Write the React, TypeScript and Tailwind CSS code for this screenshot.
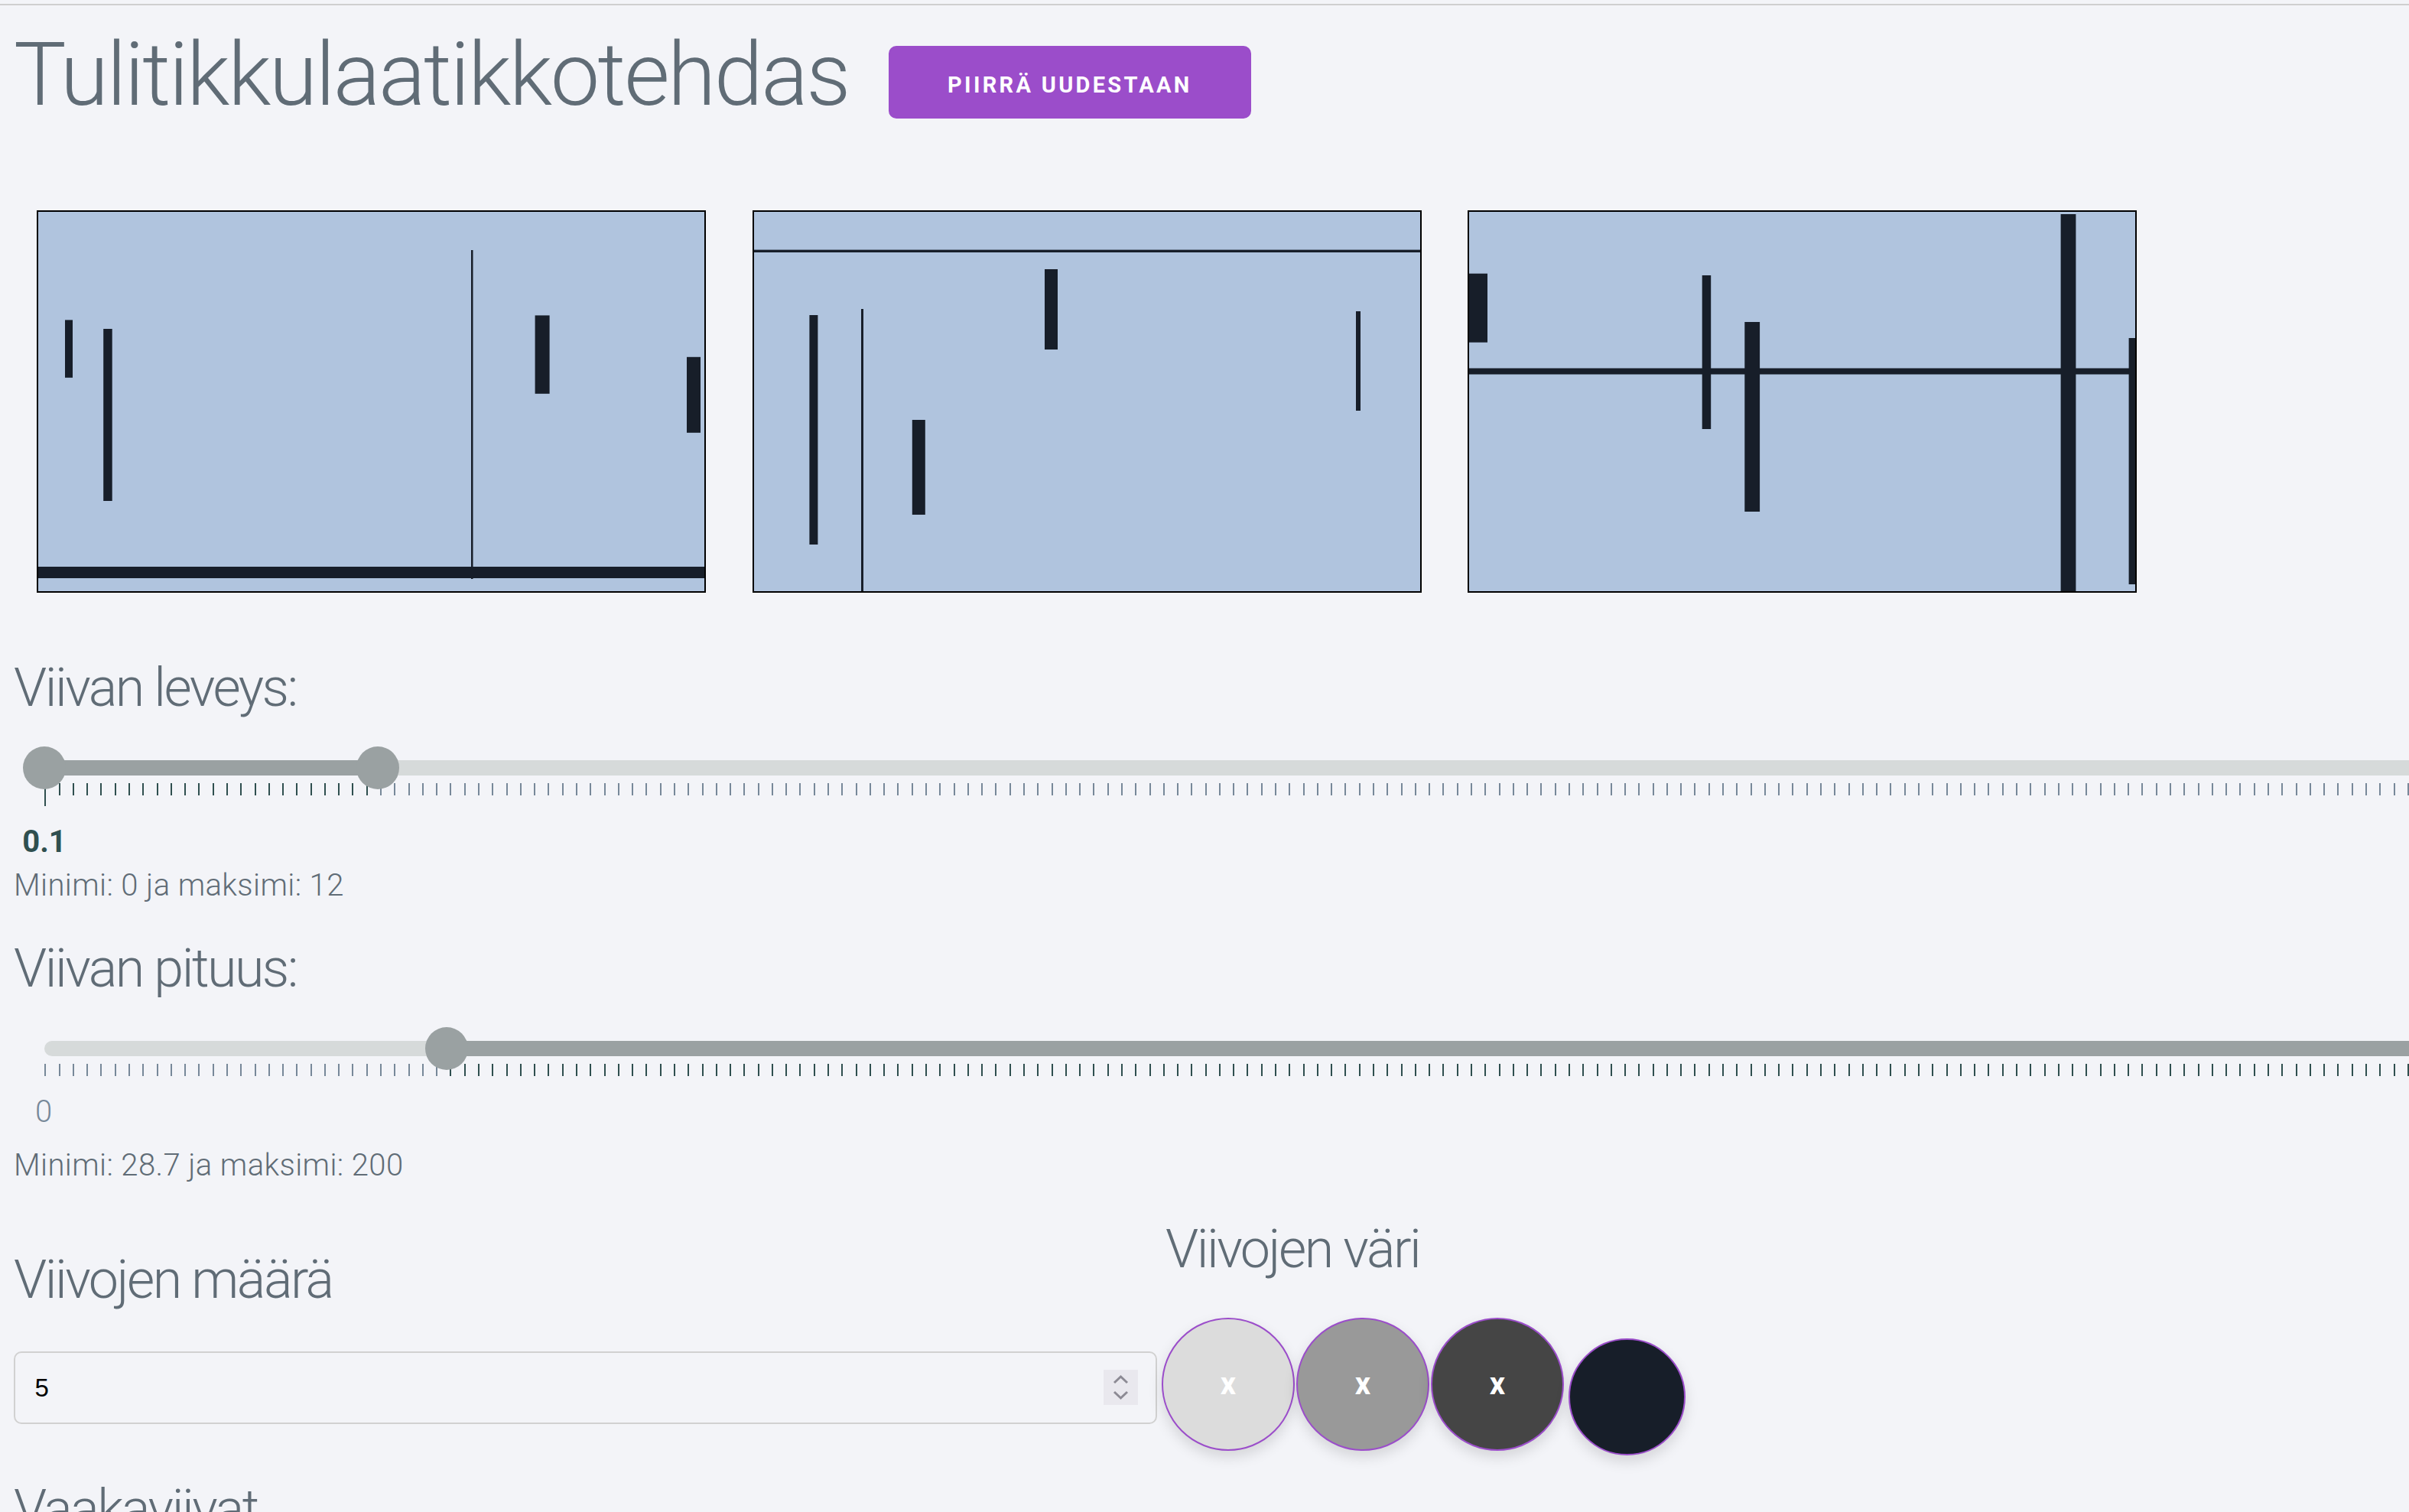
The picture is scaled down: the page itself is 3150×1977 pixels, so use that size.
import React from 'react';

type Bar = { x: number; y: number; w: number; h: number };

const CW = 875;

// viivat piirtoalueilla (koordinaatit reunuksen ulkolaidasta)
const canvases: Bar[][] = [
  [
    { x: 37, y: 143.4, w: 10, h: 75.4 },
    { x: 87.2, y: 155, w: 11.5, h: 225 },
    { x: 568, y: 52, w: 2.5, h: 430 },
    { x: 651.6, y: 137.4, w: 19, h: 102.4 },
    { x: 850, y: 191.8, w: 18, h: 99 },
    { x: 0, y: 466, w: CW, h: 15 },
  ],
  [
    { x: 0, y: 51.6, w: CW, h: 3.4 },
    { x: 74.4, y: 137, w: 11, h: 300 },
    { x: 142, y: 129, w: 3, h: 371 },
    { x: 208.8, y: 274, w: 17, h: 124 },
    { x: 382, y: 77, w: 17, h: 105 },
    { x: 789, y: 132, w: 6, h: 130 },
  ],
  [
    { x: 0, y: 82.7, w: 26, h: 90 },
    { x: 0, y: 206.5, w: CW, h: 8 },
    { x: 306.7, y: 85, w: 11.5, h: 201 },
    { x: 362.3, y: 146, w: 19.8, h: 248 },
    { x: 775.6, y: 5, w: 19.8, h: 495 },
    { x: 864.6, y: 167, w: 9.6, h: 322 },
  ],
];

const colors = [
  { bg: 'bg-[#dcdcdc]', x: true },
  { bg: 'bg-[#999999]', x: true },
  { bg: 'bg-[#454545]', x: true },
];

function Canvas({ bars }: { bars: Bar[] }) {
  return (
    <div className="h-[500px] w-[875px] shrink-0 overflow-hidden border-2 border-black bg-[#b0c4de]">
      <svg className="block h-full w-full" viewBox="2 2 871 496" preserveAspectRatio="none">
        {bars.map((b, i) => (
          <rect key={i} x={b.x} y={b.y} width={b.w} height={b.h} fill="#171e29" />
        ))}
      </svg>
    </div>
  );
}

function Ticks({ dark, longFirst }: { dark: (i: number) => boolean; longFirst?: boolean }) {
  return (
    <div className="absolute left-[40.3px] top-[48px] flex">
      {Array.from({ length: 172 }).map((_, i) => (
        <div key={i} className="w-[18.29px] shrink-0">
          <div
            className={`w-[2px] ${longFirst && i === 0 ? 'h-[30px]' : 'h-[16px]'} ${
              dark(i) ? 'bg-[#2f4f4f]' : 'bg-[#778899]'
            }`}
          />
        </div>
      ))}
    </div>
  );
}

function Handle({ className }: { className: string }) {
  return <div className={`absolute top-0 z-10 size-[56px] rounded-full bg-[#9aa1a2] ${className}`} />;
}

export default function App() {
  return (
    <div className="min-h-screen w-full overflow-hidden bg-[#f3f4f8] font-['Roboto',sans-serif] font-light tracking-[0.4px] text-[#606c76]">
      <div className="h-[5px]" />
      <div className="h-[2px] bg-[#cfcfcf]" />

      <div className="pl-[18px]">
        {/* otsikko ja nappi */}
        <div className="flex items-start pt-[21.7px]">
          <h1 className="text-[115px] leading-[1.2] tracking-[-2.5px]">Tulitikkulaatikkotehdas</h1>
          <button
            type="button"
            className="ml-[52px] mt-[31.3px] h-[95px] rounded-[10px] border-[2.5px] border-[#9b4dca] bg-[#9b4dca] px-[75px] pt-[9px] text-[29px] font-bold uppercase leading-[81px] tracking-[3.3px] text-white"
          >
            Piirrä uudestaan
          </button>
        </div>

        {/* piirtoalueet */}
        <div className="mt-[108.3px] flex gap-[60.5px] pl-[30px]">
          {canvases.map((bars, i) => (
            <Canvas key={i} bars={bars} />
          ))}
        </div>

        {/* viivan leveys */}
        <h3 className="mt-[78.6px] text-[70px] leading-[1.3] tracking-[-2.5px]">Viivan leveys:</h3>
        <div className="relative mt-[31.4px] h-[78px]">
          <div className="absolute left-[40px] top-[18px] h-[20px] w-[3200px] rounded-l-full bg-[#d6dada]" />
          <div className="absolute left-[40px] top-[18px] h-[20px] w-[436px] bg-[#9aa1a2]" />
          <Ticks dark={(i) => i <= 23} longFirst />
          <Handle className="left-[12px]" />
          <Handle className="left-[448px]" />
        </div>
        <div className="mt-[27.3px] w-[80px] text-center text-[40px] font-bold leading-none tracking-normal text-[#2f4f4f]">
          0.1
        </div>
        <p className="mt-[5px] text-[40px] leading-[1.6]">Minimi: 0 ja maksimi: 12</p>

        {/* viivan pituus */}
        <h3 className="mt-[30.3px] text-[70px] leading-[1.3] tracking-[-2.5px]">Viivan pituus:</h3>
        <div className="relative mt-[31.4px] h-[64px]">
          <div className="absolute left-[40px] top-[18px] h-[20px] w-[526px] rounded-l-full bg-[#d6dada]" />
          <div className="absolute left-[566px] top-[18px] h-[20px] w-[3000px] bg-[#9aa1a2]" />
          <Ticks dark={(i) => i >= 29} />
          <Handle className="left-[538px]" />
        </div>
        <div className="mt-[27.3px] w-[78px] text-center text-[40px] leading-none tracking-normal text-[#778899]">
          0
        </div>
        <p className="mt-[17.7px] text-[40px] leading-[1.6]">Minimi: 28.7 ja maksimi: 200</p>

        {/* määrä ja väri */}
        <div className="mt-[31.6px] flex items-start">
          <div className="w-[1495px] shrink-0">
            <h3 className="mt-[40px] text-[70px] leading-[1.3] tracking-[-2.5px]">Viivojen määrä</h3>
            <div className="mt-[48.4px] flex h-[95px] items-center justify-between rounded-[10px] border-[2.5px] border-[#d1d1d1] pl-[25.5px] pr-[23.5px]">
              <span className="font-['Liberation_Sans',Arial,sans-serif] text-[33px] font-normal tracking-normal text-black">
                5
              </span>
              <div className="flex h-[46px] w-[45px] items-center justify-center bg-[#e9e8ee]">
                <svg width="45" height="46" viewBox="0 0 45 46" fill="none" stroke="#8c8a94" strokeWidth="3">
                  <path d="M14 17 L22.5 9 L31 17" />
                  <path d="M14 29 L22.5 37 L31 29" />
                </svg>
              </div>
            </div>
          </div>

          <div className="ml-[6px]">
            <h3 className="ml-[5px] text-[70px] leading-[1.3] tracking-[-2.5px]">Viivojen väri</h3>
            <div className="mt-[44.4px] flex items-start gap-[2px]">
              {colors.map((c, i) => (
                <div
                  key={i}
                  className={`flex size-[174px] items-center justify-center rounded-full border-2 border-[#9b4dca] shadow-[0_8px_18px_rgba(0,0,0,0.13)] ${c.bg}`}
                >
                  <span className="text-[40px] font-bold leading-none tracking-normal text-white">x</span>
                </div>
              ))}
              <div className="ml-[4px] mt-[27px] size-[153px] rounded-full border-2 border-[#9b4dca] bg-[#171e29] shadow-[0_8px_18px_rgba(0,0,0,0.13)]" />
            </div>
          </div>
        </div>

        <h3 className="mt-[25px] text-[70px] leading-[1.3] tracking-[-2.5px]">Vaakaviivat</h3>
        <div className="h-[200px]" />
      </div>
    </div>
  );
}
